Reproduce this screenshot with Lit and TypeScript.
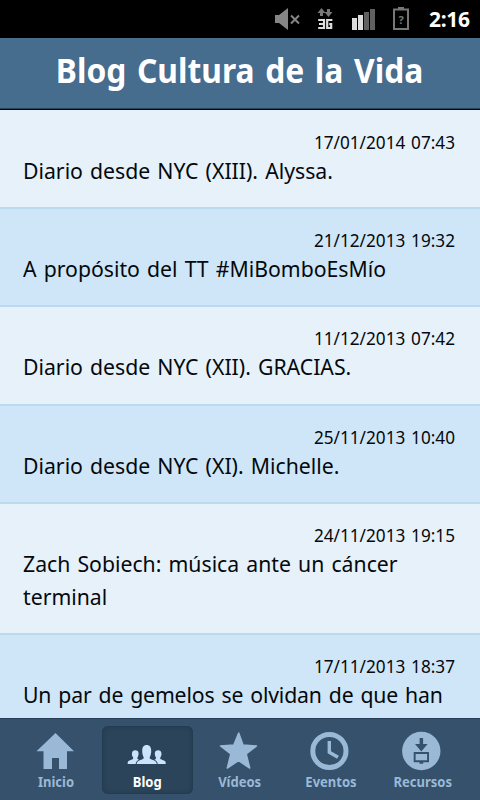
import { LitElement, html, css, svg } from "lit";
import { customElement } from "lit/decorators.js";
import { classMap } from "lit/directives/class-map.js";

const posts = [
  { date: "17/01/2014 07:43", title: "Diario desde NYC (XIII). Alyssa." },
  { date: "21/12/2013 19:32", title: "A propósito del TT #MiBomboEsMío" },
  { date: "11/12/2013 07:42", title: "Diario desde NYC (XII). GRACIAS." },
  { date: "25/11/2013 10:40", title: "Diario desde NYC (XI). Michelle." },
  { date: "24/11/2013 19:15", title: "Zach Sobiech: música ante un cáncer terminal" },
  { date: "17/11/2013 18:37", title: "Un par de gemelos se olvidan de que han", tight: true },
];

const tabs = [
  {
    label: "Inicio",
    icon: svg`<path d="M20.5 2L39 20.3H32V38H24V27H17V38H8.5V20.3H1.5Z"/>`,
  },
  {
    label: "Blog",
    active: true,
    icon: svg`<path d="M0.7 33V31.5C0.7 29.5 3.5 29.2 5.6 28.2C6.6 27.6 6.2 26.8 5.8 26C5 24.8 4.8 23.6 5 22.3C5.1 20.2 6.3 19.3 8.2 19.3C10.3 19.3 11.6 20.4 11.6 22.6C11.6 24.2 11.2 25.3 10.6 26.3C10 27.6 10.4 28.1 12 28.7C10 29.8 8.9 30.6 8.7 33Z"/>
      <path d="M38.7 33V31.5C38.7 29.5 35.9 29.2 33.8 28.2C32.8 27.6 33.2 26.8 33.6 26C34.4 24.8 34.6 23.6 34.4 22.3C34.3 20.2 33.1 19.3 31.2 19.3C29.1 19.3 27.8 20.4 27.8 22.6C27.8 24.2 28.2 25.3 28.8 26.3C29.4 27.6 29 28.1 27.4 28.7C29.4 29.8 30.5 30.6 30.7 33Z"/>
      <path d="M9.7 33C9.7 30 12.4 29.6 15.4 28.3C17 27.6 17 26.6 16.2 25.2C15.5 23.8 15.2 22.2 15.2 19.8C15.2 16.1 16.8 14 19.7 14C22.6 14 24.2 16.1 24.2 19.8C24.2 22.2 23.9 23.8 23.2 25.2C22.4 26.6 22.4 27.6 24 28.3C27 29.6 29.7 30 29.7 33Z"/>`,
  },
  {
    label: "Vídeos",
    icon: svg`<path class="round" d="M19.7 2L24 14L37.5 15L27.2 23L30.7 37L19.5 29.6L8.3 37L11.8 23L1.5 15L14.8 14Z"/>`,
  },
  {
    label: "Eventos",
    icon: svg`<circle class="line" cx="19.4" cy="20" r="16.6" stroke-width="5"/><path class="line" stroke-width="3.4" d="M19.3 10V21.2L28 26.3"/>`,
  },
  {
    label: "Recursos",
    icon: svg`<circle cx="19.3" cy="20" r="19.2"/><path class="cut" d="M17.6 7H21.1V13H25.6L19.3 20.6L13 13H17.6ZM11.7 21H27V31.2H21.2V32.8H17.5V31.2H11.7ZM13.6 22.9V29.3H25.1V22.9Z"/>`,
  },
];

@customElement("app-root")
export class AppRoot extends LitElement {
  static styles = css`
    :host {
      display: flex;
      flex-direction: column;
      width: 480px;
      height: 800px;
      overflow: hidden;
      font-family: "Noto Sans", sans-serif;
      color: #05090d;
      background: #000;
    }
    * { box-sizing: border-box; }
    .status {
      height: 38px;
      flex: none;
      display: flex;
      justify-content: flex-end;
      background: #000;
    }
    .status svg { width: 160px; height: 38px; }
    .clock {
      width: 60px;
      padding-left: 9px;
      color: #fff;
      font-weight: 700;
      font-size: 21px;
      line-height: 38px;
      letter-spacing: -0.3px;
    }
    h1 {
      flex: none;
      margin: 0;
      height: 72px;
      background: #466c8e;
      border-bottom: 1px solid #02070c;
      box-shadow: inset 0 -1px #29435b;
      color: #fff;
      text-align: center;
      font-size: 34px;
      line-height: 65px;
      word-spacing: 2.5px;
      white-space: nowrap;
    }
    h1 span { display: inline-block; transform: scaleX(0.935); }
    .list {
      flex: 1;
      min-height: 0;
      overflow: hidden;
      padding-top: 1px;
      background: #e6f1fa;
    }
    .post {
      padding: 15px 25px 20.2px 23px;
      background: #e6f1fa;
      border-bottom: 2px solid #bbdaf0;
    }
    .post:nth-child(even) { background: #cfe6f8; }
    .date {
      text-align: right;
      font-size: 18px;
      line-height: 33px;
      height: 28px;
      word-spacing: 1.3px;
      transform: scaleX(0.955);
      transform-origin: right;
    }
    .title {
      width: 458px;
      font-size: 22.5px;
      line-height: 33px;
      word-spacing: 1.7px;
      transform: scaleX(0.943);
      transform-origin: left;
    }
    .tight .title { letter-spacing: -0.16px; }
    nav {
      flex: none;
      display: flex;
      height: 82px;
      padding: 7px 11.5px 6px 10px;
      background: #35516b;
      border-top: 1px solid #263f58;
    }
    .tab {
      flex: 1;
      display: flex;
      flex-direction: column;
      align-items: center;
      padding-top: 5px;
      border-radius: 6px;
      color: #9ab9d7;
      font-weight: 700;
      font-size: 13.7px;
      line-height: 22px;
    }
    .tab span { transform: scaleX(0.95); }
    .tab svg { width: 40px; height: 40px; margin-left: -1px; fill: currentColor; flex: none; }
    .tab.active {
      background: #2b4459;
      box-shadow: inset 0 0 4px #1d3448;
      color: #fff;
    }
    .active svg { color: #cbe3fb; }
    .line { fill: none; stroke: currentColor; }
    .round { stroke: currentColor; stroke-width: 1.5; stroke-linejoin: round; }
    .cut { fill: #35516b; fill-rule: evenodd; }
    .q { fill: #777; font: 700 11px "Noto Sans", sans-serif; }
  `;

  render() {
    return html`
      <div class="status">
        <svg viewBox="0 0 160 38">
          <path fill="#858585" d="M15 15H19L28 8V30L19 23H15Z" />
          <path stroke="#858585" stroke-width="2" d="M31 15.5L39 23.5M39 15.5L31 23.5" />
          <path fill="#777" d="M57.5 13L61.5 8L65.5 13H63V16H60V13ZM64.5 12H67V9H70V12H72.5L68.5 17Z" />
          <path fill="none" stroke="#ddd" stroke-width="2.2" d="M58.2 20H64V28H58.2M59 24H64M72.4 20H67.2V28H71.2V24.2H69.2" />
          <path fill="#ddd" d="M92 18H97V30H92ZM98 15H103V30H98Z" />
          <path fill="#606060" d="M104 12H109V30H104ZM110 9H115V30H110Z" />
          <path fill="none" stroke="#777" stroke-width="2" d="M134 9.5H148V29H134Z" />
          <path fill="#777" d="M138 7H144V10H138Z" />
          <text class="q" x="138.4" y="23.5">?</text>
        </svg>
        <div class="clock">2:16</div>
      </div>
      <h1><span>Blog Cultura de la Vida</span></h1>
      <div class="list">
        ${posts.map(
          (p) => html`<div class=${classMap({ post: true, tight: !!p.tight })}>
            <div class="date">${p.date}</div>
            <div class="title">${p.title}</div>
          </div>`
        )}
      </div>
      <nav>
        ${tabs.map(
          (t) => html`<div class=${classMap({ tab: true, active: !!t.active })}>
            <svg viewBox="0 0 40 40">${t.icon}</svg>
            <span>${t.label}</span>
          </div>`
        )}
      </nav>
    `;
  }
}
